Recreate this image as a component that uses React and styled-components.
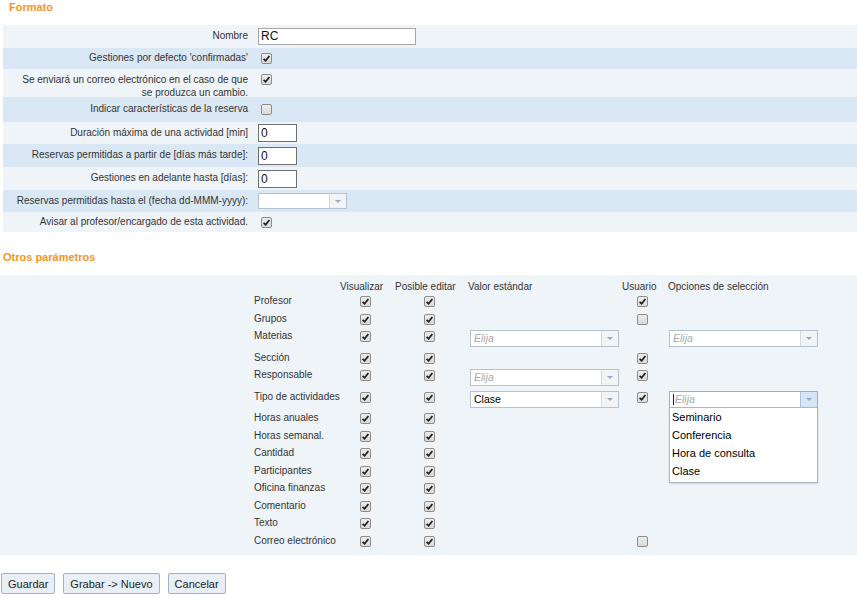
import React from 'react';
import styled, { createGlobalStyle } from 'styled-components';

const GlobalStyle = createGlobalStyle`
  body {
    margin: 0;
    background: #fff;
    font-family: "Liberation Sans", Arial, sans-serif;
    color: #333;
  }
`;

const Page = styled.div`
  width: 857px;
  padding-bottom: 4px;
`;

const SectionTitle = styled.h2`
  margin: ${p => p.$top || 0}px 0 11px ${p => p.$left}px;
  font-size: 11px;
  line-height: 14px;
  font-weight: 700;
  color: #f7961e;
`;

// ---------- top form ----------

const FormTable = styled.div`
  margin-left: 3px;
`;

const FormRow = styled.div`
  display: grid;
  grid-template-columns: 249px 1fr;
  align-items: center;
  height: ${p => p.$h}px;
  background: ${p => (p.$dark ? '#dae8f5' : '#eff4f9')};
`;

const FormLabel = styled.div`
  text-align: right;
  padding-right: 4px;
  font-size: 10px;
  line-height: 13px;
  white-space: nowrap;
  color: #333;
  align-self: ${p => (p.$top ? 'start' : 'center')};
  padding-top: ${p => (p.$top ? 4 : 0)}px;
  margin-top: ${p => (p.$top ? 0 : -2)}px;
`;

const FormValue = styled.div`
  padding-left: 6px;
  display: flex;
  align-items: center;
  align-self: ${p => (p.$top ? 'start' : 'center')};
  padding-top: ${p => (p.$top ? 5 : 0)}px;
`;

const TextInput = styled.div`
  box-sizing: border-box;
  width: ${p => p.$w}px;
  height: ${p => p.$h}px;
  border: 1px solid ${p => p.$border};
  background: #fff;
  font-size: 12px;
  line-height: ${p => p.$h - 2}px;
  padding-left: 2px;
  color: #111;
`;

// ---------- checkbox ----------

const Box = styled.span`
  display: flex;
  align-items: center;
  justify-content: center;
  flex: none;
  box-sizing: border-box;
  width: 11px;
  height: 11px;
  margin-left: ${p => p.$ml || 0}px;
  border: 1px solid #8d8d8d;
  border-radius: 2px;
  background: linear-gradient(#ececec, #d9d9d9);
`;

function Check({ on, ml }) {
  return (
    <Box $ml={ml}>
      {on && (
        <svg width="9" height="9" viewBox="0 0 9 9">
          <path d="M1.6 4.8 L3.6 6.8 L7.4 2" fill="none" stroke="#1e1e1e" strokeWidth="1.7" />
        </svg>
      )}
    </Box>
  );
}

// ---------- select ----------

const SelectWrap = styled.div`
  position: relative;
  display: flex;
  box-sizing: border-box;
  width: ${p => p.$w}px;
  height: ${p => p.$h || 17}px;
  border: 1px solid ${p => (p.$open ? '#8db2d8' : '#b5c2d0')};
  background: #fff;
`;

const SelectText = styled.div`
  flex: 1;
  padding-left: 3px;
  font-size: 10.5px;
  line-height: ${p => (p.$h || 17) - 2}px;
  color: ${p => (p.$placeholder ? '#a8a8a8' : '#000')};
  font-style: ${p => (p.$placeholder ? 'italic' : 'normal')};
  display: flex;
  align-items: center;
`;

const Caret = styled.span`
  display: inline-block;
  width: 1px;
  height: 11px;
  background: #222;
  margin-right: 1px;
`;

const ArrowBtn = styled.div`
  width: 16px;
  border-left: 1px solid ${p => (p.$open ? '#a9c4e2' : '#d3d9e0')};
  background: ${p => (p.$open ? '#d6e6f6' : '#f2f3f5')};
  display: flex;
  align-items: center;
  justify-content: center;

  &::after {
    content: '';
    border-left: 3.5px solid transparent;
    border-right: 3.5px solid transparent;
    border-top: 3.5px solid #93a9c4;
  }
`;

const DropList = styled.div`
  position: absolute;
  top: 100%;
  left: -1px;
  right: -1px;
  box-sizing: border-box;
  border: 1px solid #a5b8cc;
  background: #fff;
  box-shadow: 0 1px 2px rgba(0, 0, 0, 0.12);
  padding: 0 0 1px;
  z-index: 5;
`;

const DropItem = styled.div`
  font-size: 11px;
  line-height: 18.3px;
  padding-left: 2px;
  color: #000;
`;

function Select({ w, h, value, placeholder, open, options }) {
  return (
    <SelectWrap $w={w} $h={h} $open={open}>
      <SelectText $h={h} $placeholder={!value}>
        {open && <Caret />}
        {value || placeholder}
      </SelectText>
      <ArrowBtn $open={open} />
      {open && (
        <DropList>
          {options.map(o => (
            <DropItem key={o}>{o}</DropItem>
          ))}
        </DropList>
      )}
    </SelectWrap>
  );
}

// ---------- parameters table ----------

const Panel = styled.div`
  background: #eff4f9;
  padding: 5px 0 5px 254px;
`;

const Grid = styled.div`
  display: grid;
  grid-template-columns: 86px 55px 73px 154px 46px 1fr;
  align-items: start;
`;

const HeadCell = styled.div`
  font-size: 10px;
  line-height: 13px;
  color: #333;
  white-space: nowrap;
`;

const RowLabel = styled.div`
  font-size: 10px;
  line-height: 14px;
  padding-top: 1px;
  color: #333;
  white-space: nowrap;
`;

const CheckCell = styled.div`
  display: flex;
  align-items: flex-start;
  height: 17.5px;
  padding-top: 3px;
  box-sizing: border-box;
  padding-left: ${p => p.$pl}px;
`;

const SelectCell = styled.div`
  padding: 2px 0 2.5px ${p => p.$pl || 0}px;
`;

const Buttons = styled.div`
  display: flex;
  gap: 8px;
  margin: 18px 0 0 1px;
`;

const Button = styled.button`
  margin: 0;
  height: 21px;
  padding: 0 6px;
  border: 1px solid #9db3cc;
  border-radius: 2px;
  background: #e9eff6;
  font-family: "Liberation Sans", Arial, sans-serif;
  font-size: 11px;
  color: #222;
  cursor: pointer;
`;

const formRows = [
  { label: 'Nombre', h: 23, kind: 'name' },
  { label: "Gestiones por defecto 'confirmadas'", h: 21, kind: 'check', on: true },
  { label: ['Se enviará un correo electrónico en el caso de que', 'se produzca un cambio.'], h: 28, kind: 'check', on: true, top: true },
  { label: 'Indicar características de la reserva', h: 25, kind: 'check', on: false },
  { label: 'Duración máxima de una actividad [min]', h: 22, kind: 'num' },
  { label: 'Reservas permitidas a partir de [días más tarde]:', h: 23, kind: 'num' },
  { label: 'Gestiones en adelante hasta [días]:', h: 23, kind: 'num' },
  { label: 'Reservas permitidas hasta el (fecha dd-MMM-yyyy):', h: 22, kind: 'date' },
  { label: 'Avisar al profesor/encargado de esta actividad.', h: 20, kind: 'check', on: true },
];

const params = [
  { label: 'Profesor', user: true },
  { label: 'Grupos', user: false },
  { label: 'Materias', std: '', opts: 'Elija' },
  { label: 'Sección', user: true },
  { label: 'Responsable', std: '', user: true },
  { label: 'Tipo de actividades', std: 'Clase', user: true, open: true },
  { label: 'Horas anuales' },
  { label: 'Horas semanal.' },
  { label: 'Cantidad' },
  { label: 'Participantes' },
  { label: 'Oficina finanzas' },
  { label: 'Comentario' },
  { label: 'Texto' },
  { label: 'Correo electrónico', user: false },
];

function FormValueFor(row) {
  if (row.kind === 'name') return <TextInput $w={158} $h={17} $border="#a6a6a6">RC</TextInput>;
  if (row.kind === 'num') return <TextInput $w={39} $h={18} $border="#6f6f6f">0</TextInput>;
  if (row.kind === 'date') return <Select w={89} h={16} value="" placeholder="" />;
  return <Check on={row.on} ml={3} />;
}

export default function App() {
  return (
    <Page>
      <GlobalStyle />
      <SectionTitle $left={9}>Formato</SectionTitle>
      <FormTable>
        {formRows.map((row, i) => (
          <FormRow key={i} $h={row.h} $dark={i % 2 === 1}>
            <FormLabel $top={row.top}>
              {Array.isArray(row.label) ? (
                <>
                  {row.label[0]}
                  <br />
                  {row.label[1]}
                </>
              ) : (
                row.label
              )}
            </FormLabel>
            <FormValue $top={row.top}>{FormValueFor(row)}</FormValue>
          </FormRow>
        ))}
      </FormTable>

      <SectionTitle $left={3} $top={18}>Otros parámetros</SectionTitle>
      <Panel>
        <Grid>
          <HeadCell />
          <HeadCell>Visualizar</HeadCell>
          <HeadCell>Posible editar</HeadCell>
          <HeadCell>Valor estándar</HeadCell>
          <HeadCell>Usuario</HeadCell>
          <HeadCell>Opciones de selección</HeadCell>
        </Grid>
        {params.map(p => (
          <Grid key={p.label}>
            <RowLabel>{p.label}</RowLabel>
            <CheckCell $pl={20}>
              <Check on />
            </CheckCell>
            <CheckCell $pl={29}>
              <Check on />
            </CheckCell>
            {p.std !== undefined ? (
              <SelectCell $pl={2}>
                <Select w={149} value={p.std} placeholder="Elija" />
              </SelectCell>
            ) : (
              <div />
            )}
            {p.user !== undefined ? (
              <CheckCell $pl={15}>
                <Check on={p.user} />
              </CheckCell>
            ) : (
              <div />
            )}
            {p.opts || p.open ? (
              <SelectCell $pl={1}>
                <Select
                  w={149}
                  value=""
                  placeholder="Elija"
                  open={p.open}
                  options={['Seminario', 'Conferencia', 'Hora de consulta', 'Clase']}
                />
              </SelectCell>
            ) : (
              <div />
            )}
          </Grid>
        ))}
      </Panel>

      <Buttons>
        <Button>Guardar</Button>
        <Button>Grabar -&gt; Nuevo</Button>
        <Button>Cancelar</Button>
      </Buttons>
    </Page>
  );
}
